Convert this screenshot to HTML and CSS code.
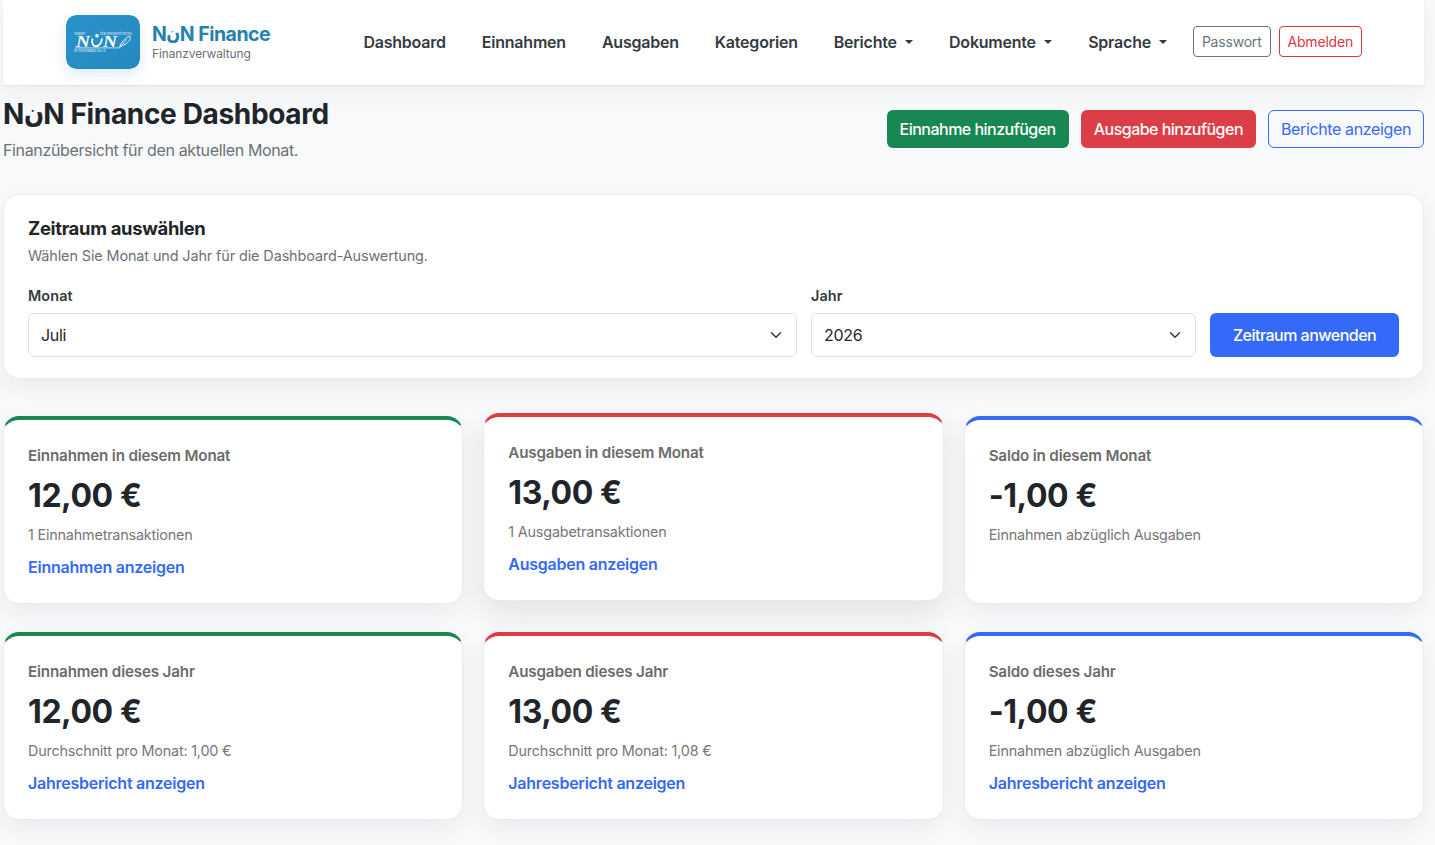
FILE: index.html
```html
<!DOCTYPE html>
<html lang="de">
<head>
  <meta charset="UTF-8" />
  <meta name="viewport" content="width=device-width, initial-scale=1.0"/>
  <title>NنN Finance Dashboard</title>
  <link rel="stylesheet" href="styles.css">
</head>
<body>
  <div class="page">
    <header class="navbar">
      <a class="brand" href="#">
        <svg class="brand-logo" viewBox="0 0 74 54" width="74" height="54">
          <defs>
            <linearGradient id="logoBg" x1="0" y1="0" x2="1" y2="1">
              <stop offset="0" stop-color="#2a92cb"/>
              <stop offset="1" stop-color="#2589c0"/>
            </linearGradient>
          </defs>
          <rect width="74" height="54" rx="10" fill="url(#logoBg)"/>
          <g fill="#fff" font-family="Liberation Serif, serif" font-weight="bold" letter-spacing="0">
            <text x="8" y="19.500" font-size="3.500" textLength="11" lengthAdjust="spacingAndGlyphs" opacity=".75">VEREIN</text>
            <text x="34" y="19.500" font-size="3.500" textLength="32" lengthAdjust="spacingAndGlyphs" opacity=".75">FÜR UNTERSTÜTZUNG</text>
            <text x="10" y="32.300" font-size="17" font-style="italic" textLength="14" lengthAdjust="spacingAndGlyphs">N</text>
            <text x="37" y="32.300" font-size="17" font-style="italic" textLength="14" lengthAdjust="spacingAndGlyphs">N</text>
            <text x="8" y="37" font-size="4" textLength="32" lengthAdjust="spacingAndGlyphs" opacity=".75">IN ÖSTERREICH e.V.</text>
          </g>
          <path d="M26.500 23.500c-2.500 10.500 8.500 10.500 9.500 0" fill="none" stroke="#fff" stroke-width="1.800"/>
          <circle cx="31" cy="20.700" r="1.800" fill="#fff"/>
          <path d="M9 32.900h44l2-4" fill="none" stroke="#fff" stroke-width=".7"/>
          <path d="M54 32l2-5 5-5 3-1 0 4-4 4zM56 30l5-6" fill="none" stroke="#fff" stroke-width=".8"/>
        </svg>
        <span class="brand-text">
          <span class="brand-name">N<span class="noon">ن</span>N Finance</span>
          <span class="brand-sub">Finanzverwaltung</span>
        </span>
      </a>
      <nav class="nav-links">
        <a class="nav-link" href="#">Dashboard</a>
        <a class="nav-link" href="#">Einnahmen</a>
        <a class="nav-link" href="#">Ausgaben</a>
        <a class="nav-link" href="#">Kategorien</a>
        <a class="nav-link dropdown" href="#">Berichte</a>
        <a class="nav-link dropdown" href="#">Dokumente</a>
        <a class="nav-link dropdown" href="#">Sprache</a>
      </nav>
      <div class="nav-actions">
        <a class="btn btn-sm btn-outline-secondary" href="#">Passwort</a>
        <a class="btn btn-sm btn-outline-danger" href="#">Abmelden</a>
      </div>
    </header>

    <main>
      <div class="page-header">
        <div>
          <h1>N<span class="noon">ن</span>N Finance Dashboard</h1>
          <p class="lead">Finanzübersicht für den aktuellen Monat.</p>
        </div>
        <div class="page-actions">
          <a class="btn btn-success" href="#">Einnahme hinzufügen</a>
          <a class="btn btn-danger" href="#">Ausgabe hinzufügen</a>
          <a class="btn btn-outline-primary" href="#">Berichte anzeigen</a>
        </div>
      </div>

      <section class="filter-card">
        <h2>Zeitraum auswählen</h2>
        <p class="hint">Wählen Sie Monat und Jahr für die Dashboard-Auswertung.</p>
        <form class="filter-form">
          <div class="field">
            <label for="month">Monat</label>
            <div class="select-wrap">
              <select id="month"><option>Juli</option></select>
              <svg class="chevron" viewBox="0 0 16 16"><path d="m2 5 6 6 6-6"/></svg>
            </div>
          </div>
          <div class="field">
            <label for="year">Jahr</label>
            <div class="select-wrap">
              <select id="year"><option>2026</option></select>
              <svg class="chevron" viewBox="0 0 16 16"><path d="m2 5 6 6 6-6"/></svg>
            </div>
          </div>
          <button type="button" class="btn btn-primary">Zeitraum anwenden</button>
        </form>
      </section>

      <section class="stats">
        <div class="stat-card income">
          <div class="stat-label">Einnahmen in diesem Monat</div>
          <div class="stat-value">12,00 €</div>
          <div class="stat-note">1 Einnahmetransaktionen</div>
          <a class="stat-link" href="#">Einnahmen anzeigen</a>
        </div>
        <div class="stat-card expense raised">
          <div class="stat-label">Ausgaben in diesem Monat</div>
          <div class="stat-value">13,00 €</div>
          <div class="stat-note">1 Ausgabetransaktionen</div>
          <a class="stat-link" href="#">Ausgaben anzeigen</a>
        </div>
        <div class="stat-card balance">
          <div class="stat-label">Saldo in diesem Monat</div>
          <div class="stat-value">-1,00 €</div>
          <div class="stat-note">Einnahmen abzüglich Ausgaben</div>
        </div>
        <div class="stat-card income">
          <div class="stat-label">Einnahmen dieses Jahr</div>
          <div class="stat-value">12,00 €</div>
          <div class="stat-note">Durchschnitt pro Monat: 1,00 €</div>
          <a class="stat-link" href="#">Jahresbericht anzeigen</a>
        </div>
        <div class="stat-card expense">
          <div class="stat-label">Ausgaben dieses Jahr</div>
          <div class="stat-value">13,00 €</div>
          <div class="stat-note">Durchschnitt pro Monat: 1,08 €</div>
          <a class="stat-link" href="#">Jahresbericht anzeigen</a>
        </div>
        <div class="stat-card balance">
          <div class="stat-label">Saldo dieses Jahr</div>
          <div class="stat-value">-1,00 €</div>
          <div class="stat-note">Einnahmen abzüglich Ausgaben</div>
          <a class="stat-link" href="#">Jahresbericht anzeigen</a>
        </div>
      </section>
    </main>
  </div>
</body>
</html>
```
FILE: styles.css
```css
* {
  margin: 0;
  padding: 0;
  box-sizing: border-box;
}

body {
  min-height: 100vh;
  background: #f8f9fb;
  color: #212529;
  font-family: Inter, "Liberation Sans", sans-serif;
  font-size: 16px;
  line-height: 1.5;
  letter-spacing: -0.2px;
}

a {
  text-decoration: none;
}

.page {
  padding: 0 11px 0 3px;
}

.navbar {
  display: flex;
  align-items: center;
  height: 85px;
  padding: 0 62px 1px 63px;
  background: #fff;
  box-shadow: 0 1px 2px rgba(0, 0, 0, 0.06), 0 8px 24px rgba(15, 40, 35, 0.05);
}

.brand {
  display: flex;
  align-items: center;
  gap: 12px;
  width: 297.4px;
}

.brand-logo {
  border-radius: 10px;
  box-shadow: 0 6px 14px rgba(35, 140, 195, 0.16);
}

.brand-text {
  display: flex;
  flex-direction: column;
}

.brand-name {
  color: #2583ab;
  font-size: 19.5px;
  font-weight: 700;
  line-height: 22px;
  letter-spacing: -0.5px;
  white-space: nowrap;
}

/* DejaVu's noon is wide and low, so squeeze and lift it between the two N */
.noon {
  display: inline-block;
  margin: 0 -0.09em 0 -0.08em;
  font-family: "DejaVu Sans", sans-serif;
  line-height: 1;
  letter-spacing: 0;
  transform: translateY(-0.06em) scaleX(0.84);
}

.brand-sub {
  color: #6c7177;
  font-size: 12px;
  line-height: 17px;
  letter-spacing: -0.13px;
}

.nav-links {
  display: flex;
  gap: 36px;
}

.nav-link {
  color: #343a40;
  font-weight: 600;
  letter-spacing: -0.22px;
}

.dropdown::after {
  content: "";
  display: inline-block;
  margin-left: 8.3px;
  vertical-align: 4px;
  border-top: 4px solid;
  border-left: 4px solid transparent;
  border-right: 4px solid transparent;
}

.nav-actions {
  display: flex;
  gap: 8px;
  margin-left: auto;
  padding-bottom: 1px;
}

.btn {
  display: inline-flex;
  align-items: center;
  justify-content: center;
  height: 38px;
  padding: 0 12px;
  border: 1px solid transparent;
  border-radius: 6px;
  font-family: inherit;
  font-size: 16px;
  font-weight: 500;
  letter-spacing: -0.52px;
  white-space: nowrap;
}

.btn-sm {
  height: 31px;
  padding: 0 8px;
  border-radius: 4px;
  font-size: 14px;
  font-weight: 400;
  letter-spacing: -0.2px;
}

.btn-outline-secondary {
  border-color: #6c757d;
  color: #6c757d;
}

.btn-outline-danger {
  border-color: #dc3545;
  color: #dc3545;
}

.btn-success {
  background: #198754;
  color: #fff;
}

.btn-danger {
  background: #dc3e48;
  color: #fff;
}

.btn-outline-primary {
  border-color: #356af5;
  color: #356af5;
  font-weight: 400;
  letter-spacing: -0.37px;
}

.btn-primary {
  height: 44px;
  background: #356af8;
  color: #fff;
}

.page-header {
  display: flex;
  justify-content: space-between;
  height: 109px;
  padding-top: 12px;
}

h1 {
  font-size: 28px;
  font-weight: 700;
  line-height: 34px;
  letter-spacing: -0.34px;
}

.lead {
  margin-top: 7px;
  color: #6c7177;
  letter-spacing: -0.36px;
}

.page-actions {
  display: flex;
  gap: 12px;
  padding-top: 13px;
}

.filter-card {
  height: 185px;
  padding: 20px 24px;
  background: #fff;
  border: 1px solid #e9ecef;
  border-radius: 16px;
  box-shadow: 0 8px 24px rgba(20, 25, 30, 0.06);
}

h2 {
  font-size: 18.4px;
  font-weight: 700;
  line-height: 26px;
  letter-spacing: -0.3px;
}

.hint {
  margin-top: 4px;
  color: #6c7177;
  font-size: 14.4px;
  line-height: 22px;
  letter-spacing: -0.1px;
}

.filter-form {
  display: grid;
  grid-template-columns: 769px 385px 1fr;
  gap: 14px;
  align-items: end;
  margin-top: 18px;
}

label {
  display: block;
  margin-bottom: 7px;
  color: #343a40;
  font-size: 14.4px;
  font-weight: 600;
  line-height: 21px;
  letter-spacing: 0.1px;
}

.select-wrap {
  display: grid;
  align-items: center;
}

.select-wrap > * {
  grid-area: 1 / 1;
}

select {
  appearance: none;
  width: 100%;
  height: 44px;
  padding: 0 12px;
  background: #fff;
  border: 1px solid #dee2e6;
  border-radius: 6px;
  color: #212529;
  font: inherit;
  letter-spacing: -0.3px;
}

.chevron {
  width: 12px;
  height: 12px;
  margin-right: 15px;
  justify-self: end;
  fill: none;
  stroke: #343a40;
  stroke-width: 2;
  stroke-linecap: round;
  stroke-linejoin: round;
}

.stats {
  display: grid;
  grid-template-columns: repeat(3, 1fr);
  gap: 28.4px 20px;
  margin-top: 37px;
}

.stat-card {
  height: 187.6px;
  padding: 24px;
  background: #fff;
  border: 1px solid #e9ecef;
  border-top-width: 4px;
  border-radius: 16px;
  box-shadow: 0 8px 24px rgba(20, 25, 30, 0.06);
}

.raised {
  transform: translateY(-3px);
  box-shadow: 0 12px 30px rgba(20, 25, 30, 0.1);
}

.income {
  border-top-color: #198754;
}

.expense {
  border-top-color: #dc3e48;
}

.balance {
  border-top-color: #356af5;
}

.stat-label {
  color: #6c6c6c;
  font-size: 15.2px;
  font-weight: 600;
  line-height: 23px;
  letter-spacing: -0.17px;
}

.stat-value {
  margin-top: 10px;
  font-size: 32px;
  font-weight: 700;
  line-height: 38px;
  letter-spacing: -0.42px;
}

.stat-note {
  margin-top: 9px;
  color: #777;
  font-size: 14.4px;
  line-height: 22px;
}

.stat-link {
  display: block;
  margin-top: 9px;
  color: #356af5;
  font-weight: 600;
  letter-spacing: -0.24px;
}
```
